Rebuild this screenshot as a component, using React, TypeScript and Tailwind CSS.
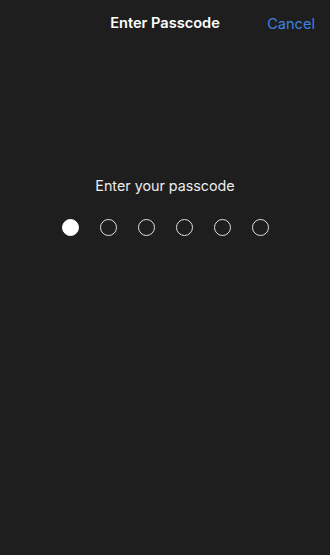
export default function App() {
  const filled = 1;
  return (
    <div className="flex h-[555px] w-[330px] flex-col bg-[#1e1e1e] font-['Inter','Liberation_Sans',sans-serif] text-white">
      <div className="relative flex h-[47px] items-center justify-center">
        <h1 className="text-[14.6px] font-semibold">Enter Passcode</h1>
        <button className="absolute right-[15px] top-[14px] text-[14.6px] text-[#3d82e0]">Cancel</button>
      </div>
      <div className="mt-[128px] flex flex-col items-center">
        <p className="text-[14.3px] text-[#ececec]">Enter your passcode</p>
        <div className="mt-[23px] flex gap-[21px]">
          {[0, 1, 2, 3, 4, 5].map((i) => (
            <span
              key={i}
              className={
                i < filled
                  ? 'h-[17px] w-[17px] rounded-full border border-white bg-white'
                  : 'h-[17px] w-[17px] rounded-full border border-[#e0e0e0]'
              }
            />
          ))}
        </div>
      </div>
    </div>
  );
}
